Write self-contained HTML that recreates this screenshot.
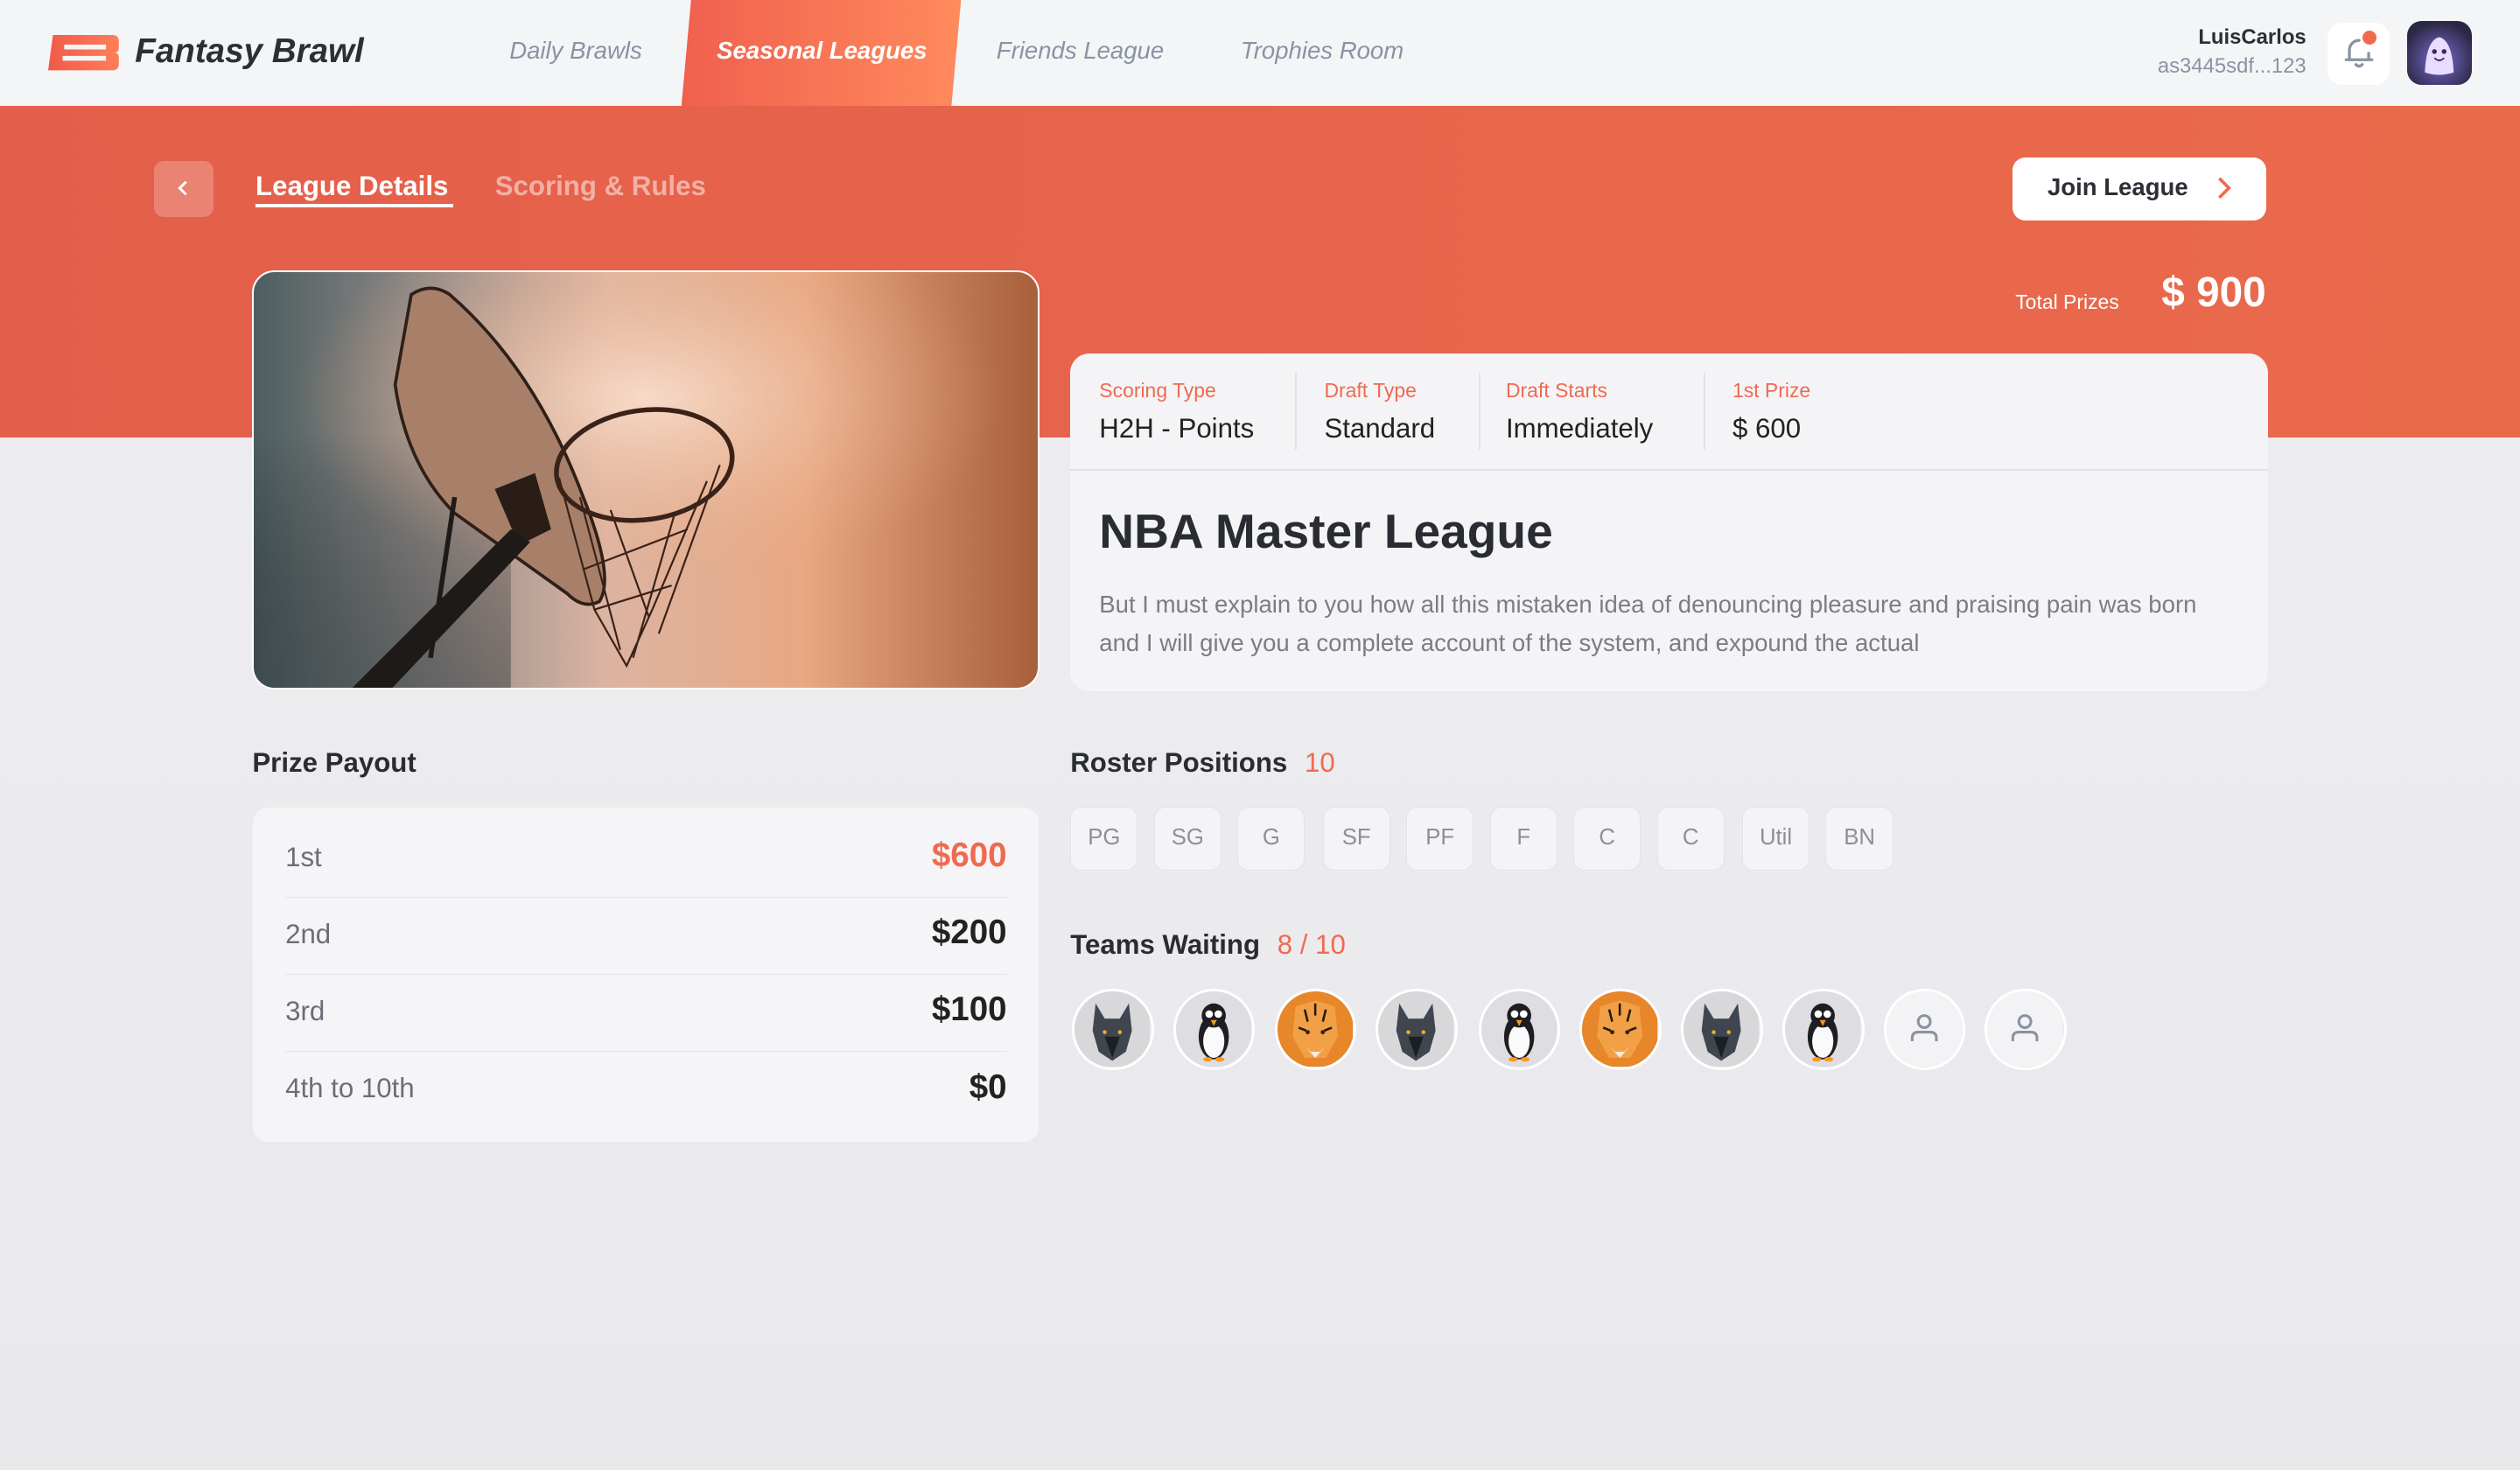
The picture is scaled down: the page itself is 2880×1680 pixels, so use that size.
<!DOCTYPE html>
<html><head><meta charset="utf-8"><style>
*{margin:0;padding:0;box-sizing:border-box}
html,body{width:2880px;height:1680px;overflow:hidden}
body{background:#ebebee;font-family:"Liberation Sans",sans-serif}
#r{zoom:1.8367;width:1568px;height:915px;position:relative;background:linear-gradient(180deg,#eeeef1,#e9e9ec)}
.a{position:absolute}
.hdr{left:0;top:0;width:1568px;height:66px;background:#f4f5f7}
.nav{top:23px;font-size:15px;font-style:italic;color:#8a93a3}
.band{left:0;top:66px;width:1568px;height:206px;background:linear-gradient(90deg,#e45f4b,#ea6a4c)}
.lbl{font-size:12.5px;color:#ef6a50;top:236px}
.val{font-size:17px;color:#222;top:257px}
.div{top:232px;width:1px;height:48px;background:#e2e2e6}
.chip{top:502px;width:42px;height:40px;background:#f4f4f6;border:1px solid #e3e3e8;border-radius:7px;font-size:14px;color:#8c8f99;text-align:center;line-height:38px}
.av{top:615px;width:51px;height:51px;border-radius:50%;border:2px solid #fff;overflow:hidden}
.row{left:20px;right:20px;height:48px;border-bottom:1px solid #e4e4e8}
.row span{position:absolute;left:0;top:13px;font-size:17px;color:#6b6e78}
.row b{position:absolute;right:0;top:10px;font-size:21px;color:#222}
</style></head><body><div id="r">
<div class="a hdr"></div>
<svg class="a" style="left:30px;top:22px" width="44" height="22" viewBox="0 0 44 22"><defs><linearGradient id="lg" x1="0" x2="1"><stop offset="0" stop-color="#f05a4a"/><stop offset="1" stop-color="#ff7f58"/></linearGradient></defs><path d="M3 0H40Q44 0 44 4V8Q44 11 41 11Q44 11 44 14V18Q44 22 40 22H0Z" fill="url(#lg)"/><path d="M10 6H36V9H10ZM9 13H36V16H9Z" fill="#f4f5f7"/></svg>
<div class="a" style="left:84px;top:20px;font-size:21px;font-weight:bold;font-style:italic;color:#2d2f36">Fantasy Brawl</div>
<div class="a nav" style="left:317px">Daily Brawls</div>
<div class="a" style="left:424px;top:0;width:174px;height:66px;background:linear-gradient(90deg,#f0604f,#ff8a5c);clip-path:polygon(6px 0,100% 0,168px 100%,0 100%)"></div>
<div class="a nav" style="left:446px;color:#fff;font-weight:bold">Seasonal Leagues</div>
<div class="a nav" style="left:620px">Friends League</div>
<div class="a nav" style="left:772px">Trophies Room</div>
<div class="a" style="right:133px;top:16px;font-size:13px;font-weight:bold;color:#2d2f36;text-align:right">LuisCarlos</div>
<div class="a" style="right:133px;top:34px;font-size:13px;color:#8a93a3;text-align:right">as3445sdf...123</div>
<div class="a" style="left:1448px;top:14px;width:39px;height:39px;background:#fff;border-radius:9px"></div>
<svg class="a" style="left:1456px;top:20px" width="24" height="24" viewBox="0 0 24 24" fill="none" stroke="#8a93a3" stroke-width="1.8" stroke-linecap="round"><path d="M6 17V11A6 6 0 0 1 12 5M18 13V17M4 17H20M10 20Q12 22 14 20"/></svg>
<div class="a" style="left:1470px;top:19px;width:9px;height:9px;border-radius:50%;background:#f06a50"></div>
<div class="a" style="left:1498px;top:13px;width:40px;height:40px;border-radius:9px;background:radial-gradient(circle at 50% 60%,#7c6bd0,#2b2845 75%)"></div>
<svg class="a" style="left:1498px;top:13px" width="40" height="40" viewBox="0 0 40 40"><path d="M11 32Q12 12 20 10Q28 12 29 32Q20 35 11 32Z" fill="#e9dcff"/><circle cx="17" cy="19" r="1.5" fill="#3a2a60"/><circle cx="23" cy="19" r="1.5" fill="#3a2a60"/><path d="M17 23Q20 26 23 23" stroke="#3a2a60" fill="none"/></svg>
<div class="a band"></div>
<div class="a" style="left:96px;top:100px;width:37px;height:35px;border-radius:6px;background:rgba(255,255,255,.22)"></div>
<svg class="a" style="left:108px;top:111px" width="12" height="12" viewBox="0 0 12 12"><path d="M8 2L4 6L8 10" stroke="#fff" stroke-width="1.6" fill="none"/></svg>
<div class="a" style="left:159px;top:106px;font-size:17px;font-weight:bold;color:#fff">League Details</div>
<div class="a" style="left:159px;top:127px;width:123px;height:2px;background:#fff"></div>
<div class="a" style="left:308px;top:106px;font-size:17px;font-weight:bold;color:rgba(255,255,255,.5)">Scoring &amp; Rules</div>
<div class="a" style="left:1252px;top:98px;width:158px;height:39px;background:#fff;border-radius:8px"></div>
<div class="a" style="left:1274px;top:108px;font-size:15px;font-weight:bold;color:#2d2f36">Join League</div>
<svg class="a" style="left:1377px;top:110px" width="14" height="14" viewBox="0 0 14 14"><path d="M4 1L10 7L4 13" stroke="#f06a50" stroke-width="2" fill="none"/></svg>
<div class="a" style="left:1254px;top:181px;font-size:12.5px;color:#fff">Total Prizes</div>
<div class="a" style="right:158px;top:167px;font-size:26px;font-weight:bold;color:#fff">$ 900</div>
<div class="a" style="left:157px;top:168px;width:490px;height:261px;border-radius:14px;border:1.5px solid #fff;overflow:hidden;background:linear-gradient(90deg,#4d5d60 0%,#8f8a88 22%,#dcb4a2 45%,#e8a882 70%,#a85f3c 100%)">
<svg width="489" height="260" viewBox="0 0 489 260" preserveAspectRatio="none"><defs><radialGradient id="g1" cx="0.5" cy="0.3" r="0.45"><stop offset="0" stop-color="#f8dccb" stop-opacity=".95"/><stop offset="1" stop-color="#e9a880" stop-opacity="0"/></radialGradient><linearGradient id="g2" x1="0" y1="0" x2="0" y2="1"><stop offset="0" stop-color="#000" stop-opacity="0"/><stop offset="1" stop-color="#2a3438" stop-opacity=".45"/></linearGradient></defs><rect width="489" height="260" fill="url(#g1)"/><rect x="0" y="100" width="160" height="160" fill="url(#g2)"/><path d="M98 14Q110 6 122 14Q175 60 205 140Q225 190 215 205Q205 210 195 200L125 150Q95 120 88 70Z" fill="#a8806a" stroke="#2e2018" stroke-width="2"/><path d="M150 135L175 125L185 160L165 170Z" fill="#2a1d18"/><path d="M60 260L160 160L172 168L85 260Z" fill="#1e1a18"/><path d="M110 240L125 140" stroke="#1e1a18" stroke-width="3"/><ellipse cx="243" cy="120" rx="55" ry="34" transform="rotate(-8 243 120)" fill="none" stroke="#3a2218" stroke-width="3"/><path d="M190 128L212 210L232 245L248 210L282 130M203 140L228 235M222 148L246 215M262 150L236 240M290 120L252 225M205 185L270 160M212 210L260 195" stroke="#3a2218" stroke-width="1.2" fill="none"/></svg></div>
<div class="a" style="left:666px;top:220px;width:745px;height:210px;background:#f4f4f6;border-radius:12px"></div>
<div class="a lbl" style="left:684px">Scoring Type</div><div class="a val" style="left:684px">H2H - Points</div>
<div class="a div" style="left:806px"></div>
<div class="a lbl" style="left:824px">Draft Type</div><div class="a val" style="left:824px">Standard</div>
<div class="a div" style="left:920px"></div>
<div class="a lbl" style="left:937px">Draft Starts</div><div class="a val" style="left:937px">Immediately</div>
<div class="a div" style="left:1060px"></div>
<div class="a lbl" style="left:1078px">1st Prize</div><div class="a val" style="left:1078px">$ 600</div>
<div class="a" style="left:666px;top:292px;width:745px;height:1px;background:#e2e2e6"></div>
<div class="a" style="left:684px;top:313px;font-size:30px;font-weight:bold;color:#2a2c33">NBA Master League</div>
<div class="a" style="left:684px;top:364px;width:685px;font-size:15px;line-height:24px;color:#7a7d86">But I must explain to you how all this mistaken idea of denouncing pleasure and praising pain was born and I will give you a complete account of the system, and expound the actual</div>
<div class="a" style="left:157px;top:465px;font-size:17px;font-weight:bold;color:#2a2c33">Prize Payout</div>
<div class="a" style="left:157px;top:502px;width:490px;height:209px;background:#f5f5f7;border-radius:10px;border:1px solid #ececf0">
<div class="a row" style="top:8px"><span>1st</span><b style="color:#f06a50">$600</b></div>
<div class="a row" style="top:56px"><span>2nd</span><b>$200</b></div>
<div class="a row" style="top:104px"><span>3rd</span><b>$100</b></div>
<div class="a row" style="top:152px;border:0"><span>4th to 10th</span><b>$0</b></div></div>
<div class="a" style="left:666px;top:465px;font-size:17px;font-weight:bold;color:#2a2c33">Roster Positions <span style="color:#f06a50;font-weight:normal;margin-left:6px">10</span></div>
<div class="a chip" style="left:666px">PG</div><div class="a chip" style="left:718px">SG</div><div class="a chip" style="left:770px">G</div><div class="a chip" style="left:823px">SF</div><div class="a chip" style="left:875px">PF</div><div class="a chip" style="left:927px">F</div><div class="a chip" style="left:979px">C</div><div class="a chip" style="left:1031px">C</div><div class="a chip" style="left:1084px">Util</div><div class="a chip" style="left:1136px">BN</div>
<div class="a" style="left:666px;top:578px;font-size:17px;font-weight:bold;color:#2a2c33">Teams Waiting <span style="color:#f06a50;font-weight:normal;margin-left:6px">8 / 10</span></div>
<svg width="0" height="0" style="position:absolute"><defs>
<symbol id="w" viewBox="0 0 50 50"><rect width="50" height="50" fill="#d8d8da"/><path d="M14 8L20 18H30L36 8L38 26L34 40L25 46L16 40L12 26Z" fill="#3f464f"/><path d="M20 30L25 44L30 30Z" fill="#1c1f24"/><circle cx="20" cy="27" r="1.3" fill="#f0b020"/><circle cx="30" cy="27" r="1.3" fill="#f0b020"/></symbol>
<symbol id="p" viewBox="0 0 50 50"><rect width="50" height="50" fill="#dedee2"/><ellipse cx="25" cy="30" rx="10" ry="15" fill="#1e1e22"/><ellipse cx="25" cy="33" rx="7" ry="11" fill="#fafafa"/><ellipse cx="25" cy="16" rx="8" ry="8" fill="#1e1e22"/><circle cx="22" cy="15" r="2.5" fill="#fff"/><circle cx="28" cy="15" r="2.5" fill="#fff"/><path d="M23 19H27L25 23Z" fill="#f59a20"/><ellipse cx="21" cy="45" rx="3" ry="1.5" fill="#f59a20"/><ellipse cx="29" cy="45" rx="3" ry="1.5" fill="#f59a20"/></symbol>
<symbol id="t" viewBox="0 0 50 50"><rect width="50" height="50" fill="#e8862a"/><path d="M12 10L25 6L38 10L40 30L32 44H18L10 30Z" fill="#f2a045"/><path d="M18 36L25 44L32 36L28 40H22Z" fill="#f5ece0"/><path d="M18 12L20 20M25 8V16M32 12L30 20M14 24L19 26M36 24L31 26" stroke="#2a1a10" stroke-width="1.5"/><circle cx="20" cy="27" r="1.4" fill="#3a2010"/><circle cx="30" cy="27" r="1.4" fill="#3a2010"/></symbol>
<symbol id="e" viewBox="0 0 50 50"><rect width="50" height="50" fill="#f3f3f5"/><circle cx="25" cy="20" r="4" fill="none" stroke="#8a93a3" stroke-width="1.8"/><path d="M17 33V31Q17 27 21 27H29Q33 27 33 31V33" fill="none" stroke="#8a93a3" stroke-width="1.8"/></symbol></defs></svg>
<div class="a av" style="left:667px"><svg width="47" height="47"><use href="#w"/></svg></div>
<div class="a av" style="left:730px"><svg width="47" height="47"><use href="#p"/></svg></div>
<div class="a av" style="left:793px"><svg width="47" height="47"><use href="#t"/></svg></div>
<div class="a av" style="left:856px"><svg width="47" height="47"><use href="#w"/></svg></div>
<div class="a av" style="left:920px"><svg width="47" height="47"><use href="#p"/></svg></div>
<div class="a av" style="left:983px"><svg width="47" height="47"><use href="#t"/></svg></div>
<div class="a av" style="left:1046px"><svg width="47" height="47"><use href="#w"/></svg></div>
<div class="a av" style="left:1109px"><svg width="47" height="47"><use href="#p"/></svg></div>
<div class="a av" style="left:1172px"><svg width="47" height="47"><use href="#e"/></svg></div>
<div class="a av" style="left:1235px"><svg width="47" height="47"><use href="#e"/></svg></div>
</div></body></html>
